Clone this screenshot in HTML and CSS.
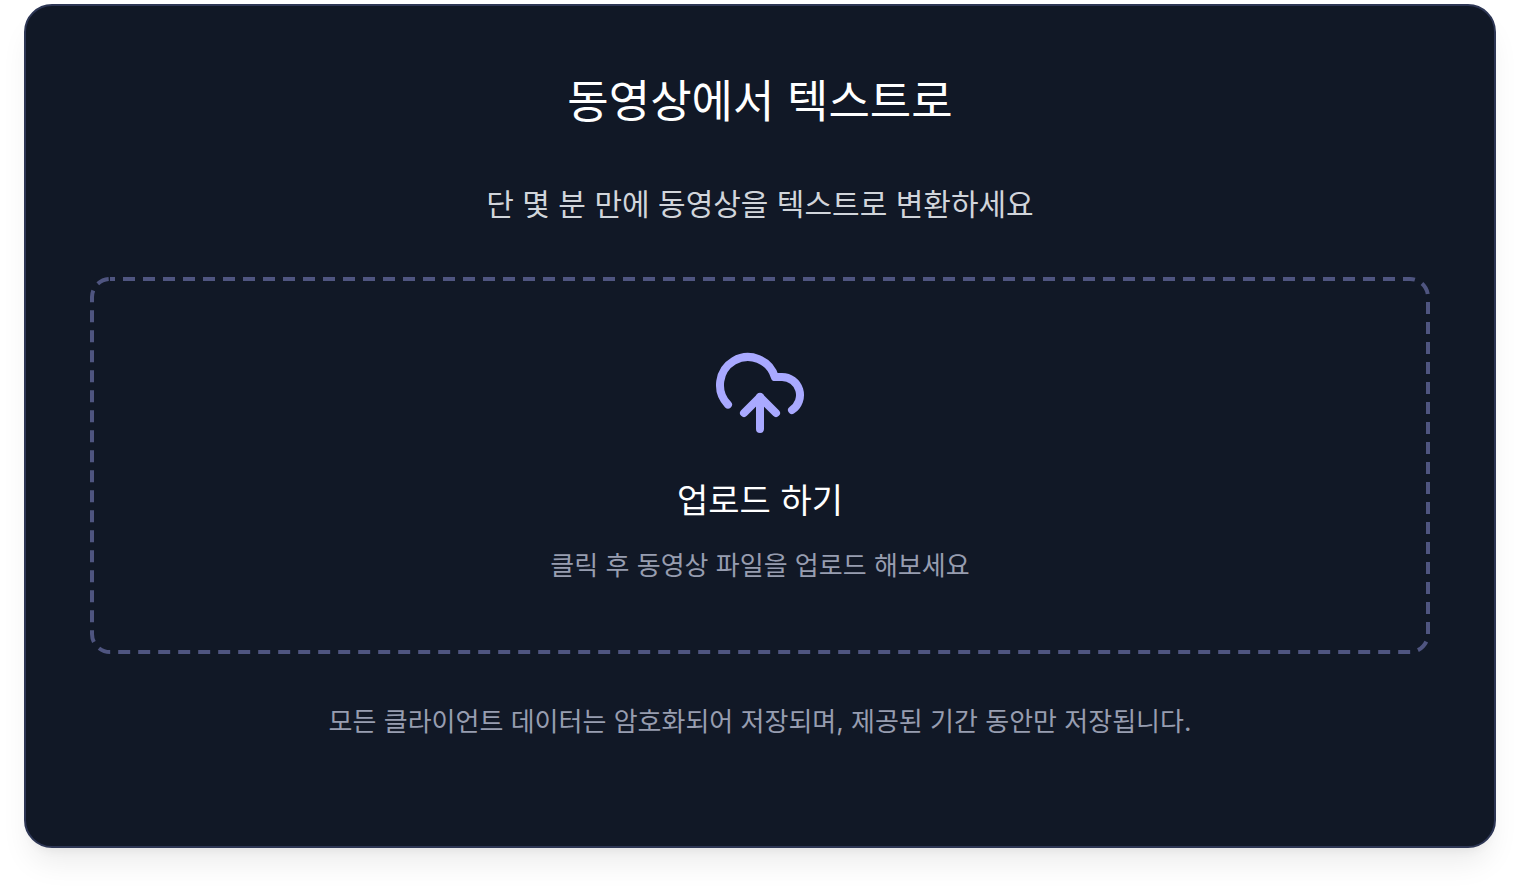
FILE: index.html
```html
<!DOCTYPE html>
<html lang="ko">
<head>
  <meta charset="UTF-8">
  <meta name="viewport" content="width=device-width, initial-scale=1.0">
  <title>동영상에서 텍스트로</title>
  <link rel="stylesheet" href="styles.css">
</head>
<body>
  <main class="card">
    <h1 class="title">동영상에서 텍스트로</h1>
    <p class="subtitle">단 몇 분 만에 동영상을 텍스트로 변환하세요</p>

    <button type="button" class="upload-box">
      <svg class="upload-outline" aria-hidden="true">
        <rect width="100%" height="100%" rx="18" />
      </svg>
      <svg class="upload-icon" viewBox="0 0 24 24" aria-hidden="true">
        <path d="M4 14.899A7 7 0 1 1 15.71 8h1.79a4.5 4.5 0 0 1 2.5 8.242" />
        <path d="M12 13v8" />
        <path d="m8 17 4-4 4 4" />
      </svg>
      <span class="upload-title">업로드 하기</span>
      <span class="upload-hint">클릭 후 동영상 파일을 업로드 해보세요</span>
    </button>

    <p class="notice">모든 클라이언트 데이터는 암호화되어 저장되며, 제공된 기간 동안만 저장됩니다.</p>
  </main>
</body>
</html>
```
FILE: styles.css
```css
* {
  margin: 0;
  padding: 0;
  box-sizing: border-box;
}

body {
  padding: 4px 24px 44px;
  background-color: #fff;
  color: #fff;
  font-family: Inter, 'Noto Sans CJK KR', sans-serif;
  text-align: center;
}

.card {
  padding: 66px 64px 104px;
  background-color: #111826;
  border: 2px solid #2d3654;
  border-radius: 28px;
  box-shadow: 0 20px 30px -6px rgba(0, 0, 0, 0.08), 0 8px 12px -8px rgba(0, 0, 0, 0.08);
}

.title {
  font-size: 45px;
  font-weight: 400;
  line-height: 60px;
}

.subtitle {
  margin-top: 48px;
  color: #d1d5db;
  font-size: 30px;
  line-height: 48px;
}

/* Upload area */
.upload-box {
  position: relative;
  display: flex;
  flex-direction: column;
  align-items: center;
  width: 100%;
  margin-top: 49px;
  padding: 68px 32px;
  background: none;
  border: none;
  color: inherit;
  font-family: inherit;
  cursor: pointer;
}

.upload-outline {
  position: absolute;
  inset: 2px;
  width: calc(100% - 4px);
  height: calc(100% - 4px);
  overflow: visible;
  fill: none;
  stroke: #4f5580;
  stroke-width: 4;
  stroke-dasharray: 12 8;
  stroke-dashoffset: 7;
}

.upload-icon {
  width: 96px;
  height: 96px;
  fill: none;
  stroke: #a9a9ff;
  stroke-width: 2;
  stroke-linecap: round;
  stroke-linejoin: round;
}

.upload-title {
  margin-top: 32px;
  font-size: 34px;
  line-height: 56px;
}

.upload-hint {
  margin-top: 17px;
  color: #979db0;
  font-size: 26px;
  line-height: 40px;
}

.notice {
  margin-top: 48px;
  color: #979db0;
  font-size: 26px;
  line-height: 40px;
}
```
